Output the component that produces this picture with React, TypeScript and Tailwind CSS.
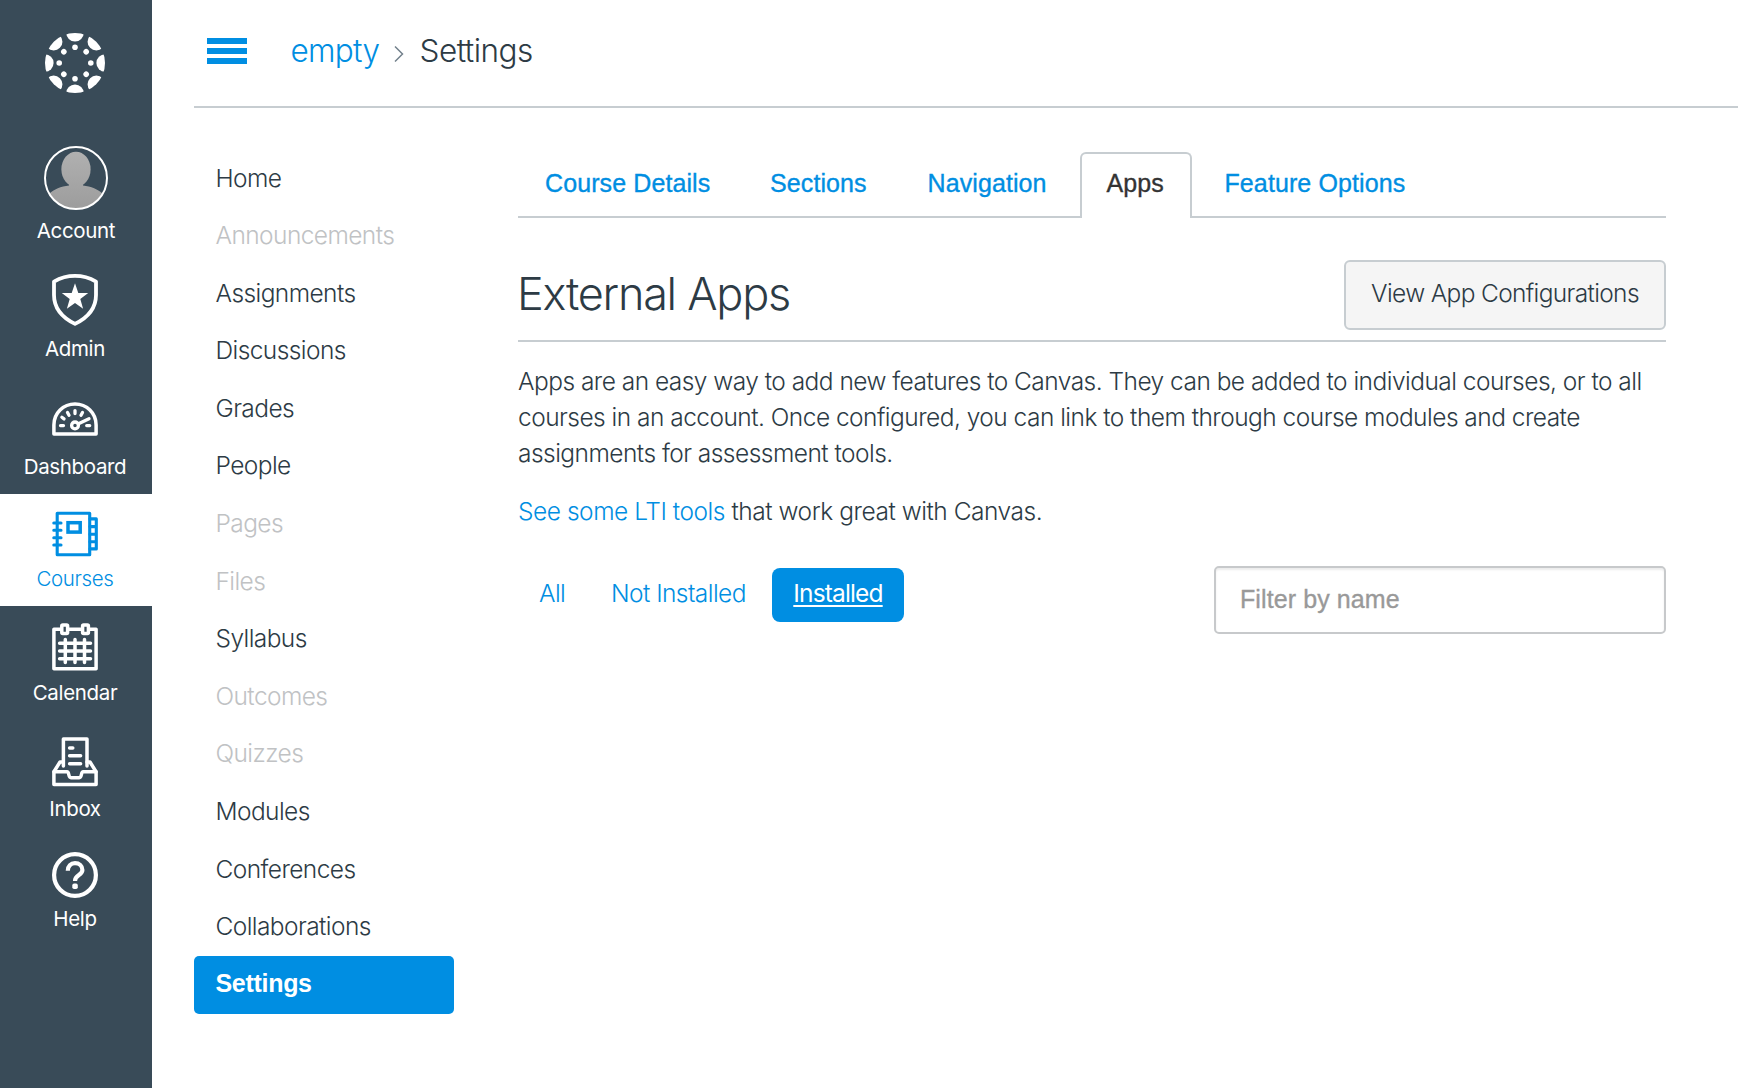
import type { ReactNode } from "react";

const stroke = {
  fill: "none",
  stroke: "currentColor",
  strokeLinecap: "round" as const,
  strokeLinejoin: "round" as const,
};

function CanvasLogo() {
  const angles = [0, 45, 90, 135, 180, 225, 270, 315];
  return (
    <svg width="60" height="60" viewBox="-30 -30 60 60" fill="currentColor">
      <clipPath id="logo-disc">
        <circle r="30" />
      </clipPath>
      <g clipPath="url(#logo-disc)">
        {angles.map((a) => (
          <circle key={a} cy="-30.2" r="8.8" transform={`rotate(${a})`} />
        ))}
      </g>
      {angles.map((a) => (
        <circle key={a} cy="-15.8" r="2.8" transform={`rotate(${a})`} />
      ))}
    </svg>
  );
}

function Avatar() {
  return (
    <svg width="64" height="64" viewBox="0 0 64 64">
      <defs>
        <linearGradient id="avatar-fill" x1="0" y1="0" x2="0" y2="64" gradientUnits="userSpaceOnUse">
          <stop offset="0" stopColor="#b2b2b2" />
          <stop offset="1" stopColor="#9c9c9c" />
        </linearGradient>
        <clipPath id="avatar-clip">
          <circle cx="32" cy="32" r="31" />
        </clipPath>
      </defs>
      <g clipPath="url(#avatar-clip)" fill="url(#avatar-fill)">
        <ellipse cx="32" cy="23.3" rx="14.6" ry="17.6" />
        <path d="M25 36V39.5C17 40.5 10 43 5 48V64H59V48C54 43 47 40.5 39 39.5V36Z" />
      </g>
      <circle cx="32" cy="32" r="31" fill="none" stroke="#fff" strokeWidth="2" />
    </svg>
  );
}

function AdminIcon() {
  return (
    <svg width="46" height="52" viewBox="0 0 46 52">
      <path {...stroke} strokeWidth="3.8" d="M2 7.6C8.5 3.8 15.5 1.9 23 1.9S37.5 3.8 44 7.6V21C44 34.5 36 43.5 23 49.9C10 43.5 2 34.5 2 21Z" />
      <path fill="currentColor" d="M23 9.3L26.3 18.9L36.2 19L28.3 25.1L31.1 34.8L23 29L14.9 34.8L17.7 25.1L9.8 19L19.7 18.9Z" />
    </svg>
  );
}

function DashboardIcon() {
  return (
    <svg width="46" height="34" viewBox="0 0 46 34" {...stroke} strokeWidth="3.3">
      <path d="M1.9 32.1V23C1.9 11 11.3 2 23 2S44.1 11 44.1 23V32.1Z" strokeWidth="3.5" />
      <circle cx="23" cy="23.4" r="3.4" />
      <path d="M26.5 21.8L37 16.8M8.5 23.6H11.5M34.7 23.6H37.7M23 8.6V11.5M9.9 15.3L12 16.9M15.5 10.5L17 13.3M30.5 10.5L29 13.3" />
    </svg>
  );
}

function CoursesIcon() {
  return (
    <svg width="46" height="46" viewBox="0 0 46 46" {...stroke} strokeWidth="3.1">
      <rect x="5.2" y="2.2" width="32.5" height="41.6" />
      <rect x="16" y="11.7" width="12.2" height="9.4" strokeWidth="3.5" strokeLinejoin="miter" />
      <path d="M1.8 12H9M1.8 19.3H9M1.8 26.7H9M1.8 34H9" />
      <path d="M38 7.9H44.3V37.9H38M38 15.6H44M38 23.2H44M38 30.7H44" />
    </svg>
  );
}

function CalendarIcon() {
  return (
    <svg width="46" height="48" viewBox="0 0 46 48" {...stroke} strokeWidth="3.5">
      <rect x="1.9" y="6.3" width="42.2" height="39.4" />
      <g fill="#394B58">
        <rect x="9.8" y="2" width="5.8" height="8.6" rx="1" />
        <rect x="30.6" y="2" width="5.8" height="8.6" rx="1" />
      </g>
      <path d="M13.3 16.4V39.4M23 16.4V39.4M32.5 16.4V39.4M7.6 20.3H38.5M7.6 28H38.5M7.6 35.7H38.5" />
    </svg>
  );
}

function InboxIcon() {
  return (
    <svg width="46" height="50" viewBox="0 0 46 50" {...stroke} strokeWidth="3.5">
      <path d="M11.4 29V2.1H35V29" />
      <path d="M17.6 11H20.8M17.6 18.8H28.6M17.6 26.8H28.6" />
      <path d="M11 25H8L1.9 34.7V47.6H44.1V34.7L38 25H35" />
      <path d="M2 34.7H15C17.5 34.7 16 40.7 19 40.7H27.2C30.2 40.7 28.7 34.7 31.2 34.7H44" />
    </svg>
  );
}

function HelpIcon() {
  return (
    <svg width="46" height="46" viewBox="0 0 46 46">
      <circle cx="23" cy="23" r="20.9" fill="none" stroke="currentColor" strokeWidth="4.2" />
      <path fill="none" stroke="currentColor" strokeWidth="4.2" d="M15.8 18.7C15.8 14 18.8 11.2 23 11.2S30.4 14 30.4 18C30.4 23.3 23 22.8 23 28.9" />
      <rect x="20.3" y="31.6" width="5.5" height="5.5" rx="1.8" fill="currentColor" />
    </svg>
  );
}

function NavItem({ box, label, active, children }: { box: string; label: string; active?: boolean; children: ReactNode }) {
  return (
    <a className={`flex flex-col items-center ${box} ${active ? "bg-white font-[350] text-[#008EE2]" : "font-normal text-white"}`}>
      {children}
      <span className="text-[20.5px] leading-6 tracking-[-0.35px]">{label}</span>
    </a>
  );
}

const courseLinks: [string, boolean][] = [
  ["Home", true],
  ["Announcements", false],
  ["Assignments", true],
  ["Discussions", true],
  ["Grades", true],
  ["People", true],
  ["Pages", false],
  ["Files", false],
  ["Syllabus", true],
  ["Outcomes", false],
  ["Quizzes", false],
  ["Modules", true],
  ["Conferences", true],
  ["Collaborations", true],
];

const tabText =
  "font-['Liberation_Sans',sans-serif] font-normal text-[25px] leading-[30px] tracking-[0.1px] [-webkit-text-stroke:0.35px_currentColor]";

export default function App() {
  return (
    <div className="flex h-[1088px] w-[1738px] overflow-hidden bg-white font-['Inter',sans-serif] font-[350] text-[#2D3B45]">
      <nav className="flex w-[152px] shrink-0 flex-col bg-[#394B58]">
        <div className="flex h-[131px] justify-center pt-[32.5px] pr-[2px] text-white">
          <CanvasLogo />
        </div>
        <NavItem box="h-[128px] pt-[15px] gap-[9px]" label="Account"><Avatar /></NavItem>
        <NavItem box="h-[118px] pt-[15px] pr-[2px] gap-[11px]" label="Admin"><AdminIcon /></NavItem>
        <NavItem box="h-[117px] pt-[25px] pr-[2px] gap-[19px]" label="Dashboard"><DashboardIcon /></NavItem>
        <NavItem box="h-[112px] pt-[17px] pr-[2px] gap-[10px]" label="Courses" active><CoursesIcon /></NavItem>
        <NavItem box="h-[114px] pt-[17px] pr-[2px] gap-[10px]" label="Calendar"><CalendarIcon /></NavItem>
        <NavItem box="h-[115px] pt-[17px] pr-[2px] gap-[10px]" label="Inbox"><InboxIcon /></NavItem>
        <NavItem box="h-[112px] pt-[17px] pr-[2px] gap-[9px]" label="Help"><HelpIcon /></NavItem>
      </nav>

      <div className="flex min-w-0 flex-1 flex-col pl-[42px]">
        <header className="flex h-[108px] shrink-0 items-start border-b-2 border-[#C7CDD1] pl-[13px]">
          <div className="mt-[38px] flex w-10 flex-col gap-1">
            <span className="h-[6px] bg-[#008EE2]" />
            <span className="h-[6px] bg-[#008EE2]" />
            <span className="h-[6px] bg-[#008EE2]" />
          </div>
          <div className="mt-[31px] ml-[43.5px] flex text-[31.5px] leading-10 tracking-[-0.5px]">
            <a className="w-[103px] tracking-[-0.7px] text-[#008EE2]">empty</a>
            <svg width="10" height="18" viewBox="0 0 10 18" className="mt-[14px] mr-[16px]" fill="none" stroke="#73818C" strokeWidth="1.5">
              <path d="M1 1.5L8.5 9L1 16.5" />
            </svg>
            <span>Settings</span>
          </div>
        </header>

        <div className="flex">
          <ul className="mt-[41.6px] flex w-[260px] shrink-0 flex-col text-[24.5px] tracking-[-0.58px]">
            {courseLinks.map(([name, enabled]) => (
              <li key={name} className={`flex h-[57.6px] items-center pb-px pl-[21.5px] ${enabled ? "" : "text-[#C0C2C4]"}`}>
                {name}
              </li>
            ))}
            <li className="flex h-[58px] items-center rounded-[5px] bg-[#008EE2] pb-[3px] pl-[21.5px] font-['Liberation_Sans',sans-serif] text-[25px] font-bold tracking-[-0.3px] text-white">
              Settings
            </li>
          </ul>

          <main className="ml-16 w-[1148px] pt-[44px]">
            <div className="flex h-[66px] border-b-2 border-[#C7CDD1] text-[#008EE2]">
              <a className={`h-[66px] w-[224px] pt-4 pl-[27px] ${tabText}`}>Course Details</a>
              <a className={`h-[66px] w-[158px] pt-4 pl-[28px] ${tabText}`}>Sections</a>
              <a className={`h-[66px] w-[180px] pt-4 pl-[27.5px] ${tabText}`}>Navigation</a>
              <a className={`h-[66px] w-[112px] rounded-t-[6px] border-2 border-b-0 border-[#C7CDD1] bg-white pt-[14px] pl-[24.5px] text-[#333333] ${tabText}`}>
                Apps
              </a>
              <a className={`pt-4 pl-[32.5px] ${tabText}`}>Feature Options</a>
            </div>

            <div className="flex h-[124px] items-start justify-between border-b-2 border-[#C7CDD1] pt-[42px]">
              <h2 className="-ml-px mt-[6px] text-[45px] leading-[56px] font-[330] tracking-[-1.25px]">External Apps</h2>
              <button className="h-[70px] w-[322px] rounded-[6px] border-2 border-[#C7CDD1] bg-[#F5F5F5] pb-[3px] text-[24.5px] tracking-[-0.65px]">
                View App Configurations
              </button>
            </div>

            <div className="pt-[21px] text-[24.5px] leading-9 tracking-[-0.53px]">
              <p>
                Apps are an easy way to add new features to Canvas. They can be added to individual courses, or to all
                <br />
                courses in an account. Once configured, you can link to them through course modules and create
                <br />
                assignments for assessment tools.
              </p>
              <p className="mt-[22px] tracking-[-0.46px]">
                <a className="text-[#008EE2]">See some LTI tools</a> that work great with Canvas.
              </p>
            </div>

            <div className="mt-[37px] flex items-start justify-between text-[24.5px] leading-9 tracking-[-0.55px]">
              <div className="mt-[2px] flex text-[#008EE2]">
                <a className="w-[72px] pt-[7px] pl-[21px]">All</a>
                <a className="w-[182px] pt-[7px] pl-[21px]">Not Installed</a>
                <a className="h-[54px] w-[132px] rounded-lg bg-[#008EE2] pt-[7px] text-center font-normal tracking-[-0.85px] text-white underline decoration-2 underline-offset-[3px]">
                  Installed
                </a>
              </div>
              <input
                placeholder="Filter by name"
                className="h-[68px] w-[452px] rounded-[5px] border-2 border-[#C7C9CB] px-6 pb-[2px] font-['Liberation_Sans',sans-serif] text-[25px] font-normal tracking-[0.1px] shadow-[inset_0_2px_2px_rgba(0,0,0,0.075)] [-webkit-text-stroke:0.35px_#999999] placeholder:text-[#999999]"
              />
            </div>
          </main>
        </div>
      </div>
    </div>
  );
}
